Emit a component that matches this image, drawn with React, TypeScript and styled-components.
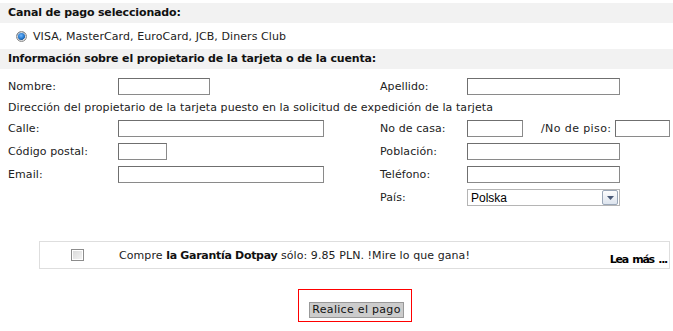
import React from "react";
import styled, { createGlobalStyle } from "styled-components";

const Global = createGlobalStyle`
  html, body { margin: 0; padding: 0; background: #fff; }
  body { font-family: Verdana, "DejaVu Sans", sans-serif; font-size: 11px; color: #222; letter-spacing: 0.08px; }
`;

const Page = styled.div`
  width: 673px;
  padding-top: 3px;
`;

const SectionHeader = styled.div`
  height: 20px;
  line-height: 20px;
  background: #f2f2f2;
  padding-left: 8px;
  font-weight: bold;
  letter-spacing: -0.15px;
  color: #111;
`;

const RadioRow = styled.label`
  display: flex;
  align-items: center;
  height: 26px;
  padding-left: 16px;
  gap: 6px;
`;

const RadioDot = styled.span`
  width: 9px;
  height: 9px;
  border-radius: 50%;
  border: 1px solid #8a8a8a;
  background: radial-gradient(circle at 45% 40%, #6fb7ff 0, #1f73c9 45%, #1a4f8c 60%, #e6e6e6 62%, #fff 100%);
  box-shadow: inset 0 0 0 1px #d8d8d8;
`;

const FormGrid = styled.div`
  display: grid;
  grid-template-columns: 110px 262px 87px 1fr;
  grid-template-rows: 23px 19px 23px 23px 23px 23px;
  padding: 6px 0 0 8px;
  align-items: center;
`;

const Label = styled.span`
  white-space: nowrap;
`;

const FullRow = styled.div`
  grid-column: 1 / -1;
  white-space: nowrap;
`;

const Cell = styled.div`
  display: flex;
  align-items: center;
`;

const TextInput = styled.input<{ $w: number }>`
  box-sizing: border-box;
  width: ${(p) => p.$w}px;
  height: 17px;
  border: 1px solid #6f6f6f;
  border-right-color: #8a8a8a;
  border-bottom-color: #8a8a8a;
  padding: 0 2px;
  margin: 0;
  font: inherit;
`;

const FloorLabel = styled.span`
  margin-left: 18px;
  margin-right: 4px;
  white-space: nowrap;
  letter-spacing: 0.4px;
`;

const SelectBox = styled.div`
  box-sizing: border-box;
  width: 153px;
  height: 17px;
  border: 1px solid #b5b5b5;
  display: flex;
  align-items: center;
  justify-content: space-between;
  padding-left: 3px;
  font-family: "Liberation Sans", Arial, sans-serif;
  font-size: 12px;
  letter-spacing: 0;
  color: #000;
`;

const SelectButton = styled.span`
  width: 14px;
  height: 13px;
  margin-right: 1px;
  border: 1px solid #9aa7b8;
  border-radius: 2px;
  background: linear-gradient(#fdfdfd, #dde4ee);
  display: flex;
  align-items: center;
  justify-content: center;
`;

const Offer = styled.div`
  margin: 32px 3px 0 39px;
  height: 26px;
  border: 1px solid #dedede;
  display: flex;
  align-items: center;
  position: relative;
`;

const Check = styled.span`
  box-sizing: border-box;
  width: 13px;
  height: 12px;
  margin-left: 31px;
  border: 1px solid #8c8c8c;
  background: linear-gradient(135deg, #d8d8d8, #f6f6f6);
  box-shadow: inset 0 0 0 1px #fff;
`;

const OfferText = styled.span`
  margin-left: 35px;
  b { color: #111; letter-spacing: -0.3px; }
`;

const ReadMore = styled.a`
  position: absolute;
  right: 2px;
  bottom: 2px;
  font-weight: bold;
  letter-spacing: -1.3px;
  word-spacing: 2px;
  color: #000;
  text-decoration: none;
`;

const SubmitWrap = styled.div`
  display: flex;
  margin: 20px 0 0 298px;
`;

const SubmitFrame = styled.div`
  border: 1px solid #ff0000;
  padding: 12px 7px 3px 10px;
`;

const SubmitButton = styled.button`
  box-sizing: border-box;
  width: 95px;
  height: 16px;
  background: #cccccc;
  border: 1px solid #999;
  font: inherit;
  color: #111;
  padding: 0;
  line-height: 14px;
  letter-spacing: 0.3px;
`;

export default function App() {
  return (
    <Page>
      <Global />
      <SectionHeader>Canal de pago seleccionado:</SectionHeader>
      <RadioRow>
        <RadioDot />
        VISA, MasterCard, EuroCard, JCB, Diners Club
      </RadioRow>
      <SectionHeader>Información sobre el propietario de la tarjeta o de la cuenta:</SectionHeader>
      <FormGrid>
        <Label>Nombre:</Label>
        <Cell><TextInput $w={92} /></Cell>
        <Label>Apellido:</Label>
        <Cell><TextInput $w={153} /></Cell>

        <FullRow>Dirección del propietario de la tarjeta puesto en la solicitud de expedición de la tarjeta</FullRow>

        <Label>Calle:</Label>
        <Cell><TextInput $w={206} /></Cell>
        <Label>No de casa:</Label>
        <Cell>
          <TextInput $w={56} />
          <FloorLabel>/No de piso:</FloorLabel>
          <TextInput $w={55} />
        </Cell>

        <Label>Código postal:</Label>
        <Cell><TextInput $w={49} /></Cell>
        <Label>Población:</Label>
        <Cell><TextInput $w={153} /></Cell>

        <Label>Email:</Label>
        <Cell><TextInput $w={206} /></Cell>
        <Label>Teléfono:</Label>
        <Cell><TextInput $w={153} /></Cell>

        <span />
        <span />
        <Label>País:</Label>
        <Cell>
          <SelectBox>
            Polska
            <SelectButton>
              <svg width="7" height="4" viewBox="0 0 7 4">
                <path d="M0 0h7L3.5 4z" fill="#4a5a78" />
              </svg>
            </SelectButton>
          </SelectBox>
        </Cell>
      </FormGrid>
      <Offer>
        <Check />
        <OfferText>
          Compre <b>la Garantía Dotpay</b> sólo: 9.85 PLN. !Mire lo que gana!
        </OfferText>
        <ReadMore href="#">Lea más ...</ReadMore>
      </Offer>
      <SubmitWrap>
        <SubmitFrame>
          <SubmitButton>Realice el pago</SubmitButton>
        </SubmitFrame>
      </SubmitWrap>
    </Page>
  );
}
